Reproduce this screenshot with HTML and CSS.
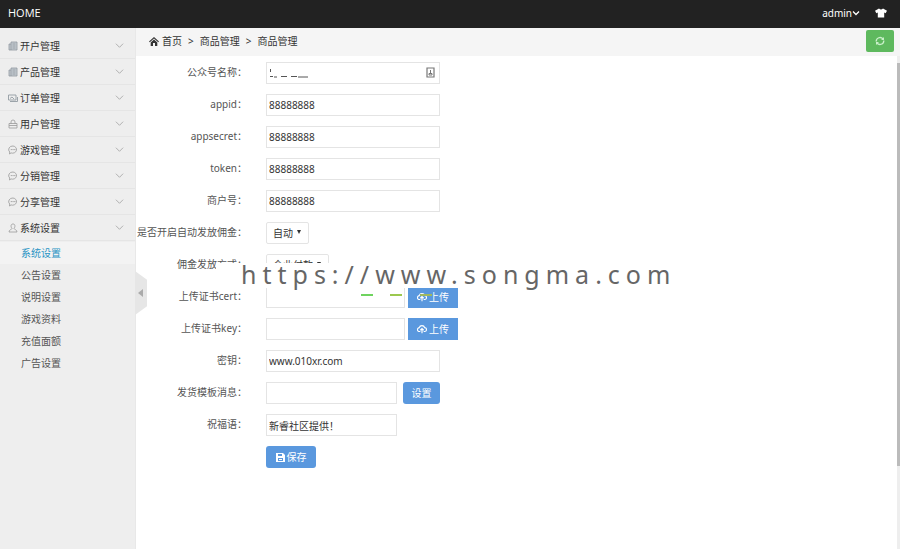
FILE: index.html
```html
<!DOCTYPE html>
<html lang="zh-CN">
<head>
<meta charset="UTF-8">
<meta name="viewport" content="width=device-width, initial-scale=1.0">
<title>系统设置</title>
<link rel="stylesheet" href="styles.css">
</head>
<body>

<svg class="defs" width="0" height="0">
  <symbol id="i-down" viewBox="0 0 10 10"><path d="M1 3l4 4 4-4" fill="none" stroke="currentColor"/></symbol>
  <symbol id="i-doc" viewBox="0 0 10 10"><path d="M3 1h6v8H1V3h2zM3 3v6M4.500 3h3M4.500 5h3M4.500 7h3" fill="#c3cad0" stroke="#8f989f" stroke-width=".8"/></symbol>
  <symbol id="i-card" viewBox="0 0 10 10"><path d="M.5 2h7.500v5H.5zM2 8.500h7.500V4M2 5.500l2-1.500 2 2" fill="none" stroke="#929ba2" stroke-width=".9"/></symbol>
  <symbol id="i-bag" viewBox="0 0 10 10"><path d="M1 4.500h8V9H1zM3 4.500V3a2 2 0 0 1 4 0v1.500M1 6.500h8" fill="none" stroke="#999" stroke-width=".8"/></symbol>
  <symbol id="i-chat" viewBox="0 0 10 10"><path d="M5 1a4 3.600 0 1 1-2 6.900L1.500 9l.2-2A4 3.600 0 0 1 5 1z" fill="none" stroke="#999" stroke-width=".8"/><path d="M2.800 4.600h.9M4.600 4.600h.9M6.400 4.600h.9" stroke="#888"/></symbol>
  <symbol id="i-user" viewBox="0 0 10 10"><path d="M5 1c2.500 0 2.300 3 1 4.500 0 1 3 1 3 3.500H1c0-2.500 3-2.500 3-3.500C2.700 4 2.500 1 5 1z" fill="none" stroke="#999" stroke-width=".8"/></symbol>
  <symbol id="i-upload" viewBox="0 0 12 12"><path d="M4 9H3a2.300 2.300 0 0 1-.3-4.600 3.400 3.400 0 0 1 6.500 0A2.300 2.300 0 0 1 9 9H8M6 11V6M4 7.500l2-2 2 2" fill="none" stroke="currentColor" stroke-width="1.400"/></symbol>
</svg>

<header class="topbar">
  <a class="brand" href="#">HOME</a>
  <div class="topbar-right">
    <a class="admin" href="#">admin<svg width="8" height="8" viewBox="0 0 8 8"><path d="M1 2.500l3 3 3-3" fill="none" stroke="#fff" stroke-width="1.300"/></svg></a>
    <a class="skin" href="#" aria-label="skin"><svg width="12" height="10" viewBox="0 0 12 10"><path d="M4 .5Q6 2.500 8 .5L12 2.800 10.600 5.300 9.200 4.600V9.500H2.800V4.600L1.400 5.300 0 2.800z" fill="#fff"/></svg></a>
  </div>
</header>

<div class="layout">
  <aside class="sidebar">
    <ul class="menu">
      <li><a href="#"><svg class="icon"><use href="#i-doc"/></svg>开户管理<svg class="arrow"><use href="#i-down"/></svg></a></li>
      <li><a href="#"><svg class="icon"><use href="#i-doc"/></svg>产品管理<svg class="arrow"><use href="#i-down"/></svg></a></li>
      <li><a href="#"><svg class="icon"><use href="#i-card"/></svg>订单管理<svg class="arrow"><use href="#i-down"/></svg></a></li>
      <li><a href="#"><svg class="icon"><use href="#i-bag"/></svg>用户管理<svg class="arrow"><use href="#i-down"/></svg></a></li>
      <li><a href="#"><svg class="icon"><use href="#i-chat"/></svg>游戏管理<svg class="arrow"><use href="#i-down"/></svg></a></li>
      <li><a href="#"><svg class="icon"><use href="#i-chat"/></svg>分销管理<svg class="arrow"><use href="#i-down"/></svg></a></li>
      <li><a href="#"><svg class="icon"><use href="#i-chat"/></svg>分享管理<svg class="arrow"><use href="#i-down"/></svg></a></li>
      <li><a href="#"><svg class="icon"><use href="#i-user"/></svg>系统设置<svg class="arrow"><use href="#i-down"/></svg></a></li>
    </ul>
    <ul class="submenu">
      <li><a class="active" href="#">系统设置</a></li>
      <li><a href="#">公告设置</a></li>
      <li><a href="#">说明设置</a></li>
      <li><a href="#">游戏资料</a></li>
      <li><a href="#">充值面额</a></li>
      <li><a href="#">广告设置</a></li>
    </ul>
    <button class="collapse" type="button" aria-label="收起"></button>
  </aside>

  <main class="main">
    <nav class="breadcrumb">
      <svg width="10" height="9" viewBox="0 0 10 9"><path d="M5 0l5 4.500-.8.800L5 1.600.8 5.300 0 4.500zM5 2.500l3.300 3V9H6V6H4v3H1.700V5.500z" fill="#333"/></svg>
      <a href="#">首页</a><span>&gt;</span><a href="#">商品管理</a><span>&gt;</span><a href="#">商品管理</a>
      <button class="refresh" type="button" aria-label="刷新"><svg width="10" height="10" viewBox="0 0 10 10"><path d="M1.200 5.500A3.800 3.800 0 0 1 8 3M8.800 4.500A3.800 3.800 0 0 1 2 7" fill="none" stroke="#c9efc9" stroke-width="1.300"/><path d="M9 1v3H6zM1 9V6h3z" fill="#c9efc9"/></svg></button>
    </nav>

    <div class="content">
      <form class="form">
        <div class="row">
          <label for="name">公众号名称：</label>
          <div class="field">
            <input class="text" type="text" id="name">
            <svg class="masked" width="42" height="10" viewBox="0 0 42 10"><path d="M1.500 1v3M1 8.500h3M5 9h3M12 8.500h6M22 8.500h6M29 9h10" stroke="#555" fill="none"/></svg>
            <svg class="contact" width="9" height="11" viewBox="0 0 9 11"><path d="M1 1h7v9H1z" fill="#fff" stroke="#777" stroke-width="1.200"/><path d="M4.500 3v3M3 8V6.500h3V8z" fill="none" stroke="#777"/></svg>
          </div>
        </div>
        <div class="row">
          <label for="appid">appid：</label>
          <input class="text" type="text" id="appid" value="88888888">
        </div>
        <div class="row">
          <label for="appsecret">appsecret：</label>
          <input class="text" type="text" id="appsecret" value="88888888">
        </div>
        <div class="row">
          <label for="token">token：</label>
          <input class="text" type="text" id="token" value="88888888">
        </div>
        <div class="row">
          <label for="mch">商户号：</label>
          <input class="text" type="text" id="mch" value="88888888">
        </div>
        <div class="row">
          <label for="auto">是否开启自动发放佣金：</label>
          <div class="select"><select id="auto"><option>自动</option></select></div>
        </div>
        <div class="row">
          <label for="way">佣金发放方式：</label>
          <div class="select"><select id="way"><option>企业付款</option></select></div>
          <div class="watermark">
            https://www.songma.com
            <i class="dash green"></i><i class="dash lime"></i><i class="dash olive"></i>
          </div>
        </div>
        <div class="row">
          <label for="cert">上传证书cert：</label>
          <input class="text file" type="text" id="cert">
          <button class="btn upload" type="button"><svg width="10" height="10"><use href="#i-upload"/></svg>上传</button>
        </div>
        <div class="row">
          <label for="key">上传证书key：</label>
          <input class="text file" type="text" id="key">
          <button class="btn upload" type="button"><svg width="10" height="10"><use href="#i-upload"/></svg>上传</button>
        </div>
        <div class="row">
          <label for="secret">密钥：</label>
          <input class="text" type="text" id="secret" value="www.010xr.com">
        </div>
        <div class="row">
          <label for="tpl">发货模板消息：</label>
          <input class="text short" type="text" id="tpl">
          <button class="btn set" type="button">设置</button>
        </div>
        <div class="row">
          <label for="bless">祝福语：</label>
          <input class="text short" type="text" id="bless" value="新睿社区提供！">
        </div>
        <div class="row actions">
          <button class="btn" type="submit"><svg width="9" height="9" viewBox="0 0 9 9"><path d="M0 0h7l2 2v7H0z" fill="#fff"/><path d="M2 1h4v2H2zM2 5h5v3H2z" fill="#5a98de"/><path d="M3 6.500h3" stroke="#fff"/></svg>保存</button>
        </div>
      </form>
      <div class="scrollbar"><div class="thumb"></div></div>
    </div>
  </main>
</div>

</body>
</html>
```

FILE: styles.css
```css
* {
  box-sizing: border-box;
}
body {
  display: flex;
  flex-direction: column;
  min-height: 100vh;
  margin: 0;
  background-color: #fff;
  color: #333;
  font-family: "Noto Sans", "Noto Sans CJK SC", sans-serif;
  font-size: 10px;
  line-height: 16px;
}
a {
  color: inherit;
  text-decoration: none;
}
ul {
  list-style: none;
  margin: 0;
  padding: 0;
}
button, input, select {
  font: inherit;
  color: inherit;
}
.defs {
  position: absolute;
}

/* top bar */
.topbar {
  display: flex;
  justify-content: space-between;
  align-items: center;
  height: 28px;
  padding: 0 13px 2px 8px;
  background-color: #222;
  color: #fff;
}
.brand {
  font-family: "Open Sans", sans-serif;
  font-size: 11px;
}
.topbar-right, .admin {
  display: flex;
  align-items: center;
}
.topbar-right {
  gap: 15px;
}
.skin {
  display: flex;
}

.layout {
  display: flex;
  flex: 1;
}

/* left menu */
.sidebar {
  position: relative;
  flex: none;
  width: 136px;
  padding-top: 5px;
  background-color: #eee;
  border-right: 1px solid #e8e8e8;
}
.menu a {
  display: flex;
  align-items: center;
  height: 26px;
  padding: 0 11px 0 8px;
  border-bottom: 1px solid #e5e5e5;
}
.icon {
  width: 10px;
  height: 10px;
  margin-right: 2px;
}
.arrow {
  width: 9px;
  height: 9px;
  margin-left: auto;
  color: #aaa;
}
.submenu {
  padding-top: 1px;
}
.submenu a {
  display: block;
  padding: 3px 0 3px 21px;
  color: #555;
}
.submenu .active {
  background-color: #f3f3f3;
  color: #2a93c4;
}
.collapse {
  position: absolute;
  top: 243px;
  left: 100%;
  width: 12px;
  height: 44px;
  padding: 0;
  border: none;
  background-color: #e6e6e6;
  clip-path: polygon(0 0, 100% 20%, 100% 80%, 0 100%);
}
.collapse::before {
  content: "";
  display: block;
  width: 0;
  margin-left: 3px;
  border: 4px solid transparent;
  border-left: 0;
  border-right: 5px solid #aaa;
}

/* content */
.main {
  display: flex;
  flex-direction: column;
  flex: 1;
}
.breadcrumb {
  display: flex;
  align-items: center;
  height: 28px;
  padding: 0 6px 2px 13px;
  background-color: #f5f5f5;
}
.breadcrumb a {
  margin-left: 3px;
}
.breadcrumb span {
  margin: 0 3px 0 6px;
}
.refresh {
  display: flex;
  align-items: center;
  justify-content: center;
  width: 28px;
  height: 22px;
  margin-left: auto;
  padding: 0;
  border: none;
  border-radius: 2px;
  background-color: #5eb95e;
}
.content {
  display: flex;
  flex: 1;
}
.form {
  display: flex;
  flex-direction: column;
  flex: 1;
  gap: 10px;
  padding: 6px 0;
}
.row {
  position: relative;
  display: flex;
  height: 22px;
}
.row label {
  width: 111px;
  margin-right: 19px;
  padding-top: 2px;
  color: #555;
  text-align: right;
  white-space: nowrap;
}
.field {
  position: relative;
}
.text {
  width: 174px;
  height: 22px;
  padding: 0 2px;
  border: 1px solid #e4e4e4;
  background-color: #fff;
}
.text.file {
  width: 139px;
  margin-right: 3px;
}
.text.short {
  width: 131px;
  margin-right: 6px;
}
.masked {
  position: absolute;
  top: 6px;
  left: 3px;
}
.contact {
  position: absolute;
  top: 5px;
  right: 5px;
}
.select {
  position: relative;
}
.select select {
  appearance: none;
  height: 22px;
  padding: 0 15px 0 6px;
  border: 1px solid #e4e4e4;
  border-radius: 2px;
  background-color: #fff;
}
.select::after {
  content: "";
  position: absolute;
  top: 8px;
  right: 8px;
  border: 2px solid transparent;
  border-top: 4px solid #333;
  border-bottom: 0;
}
.btn {
  display: flex;
  align-items: center;
  justify-content: center;
  gap: 2px;
  width: 50px;
  height: 22px;
  padding: 0;
  border: none;
  border-radius: 3px;
  background-color: #5a98de;
  color: #fff;
}
.btn.upload {
  border-radius: 0;
}
.btn.set {
  width: 37px;
}
.actions {
  padding-left: 130px;
}

/* site address laid over the form */
.watermark {
  position: absolute;
  z-index: 1;
  top: 9px;
  left: 80px;
  width: 460px;
  height: 25px;
  padding-left: 25px;
  background-color: #fff;
  color: #666;
  font-size: 25px;
  line-height: 22px;
  letter-spacing: 6px;
  white-space: nowrap;
}
.dash {
  position: absolute;
  top: 31px;
  width: 12px;
  height: 2px;
}
.green {
  left: 145px;
  background-color: #6fd35f;
}
.lime {
  left: 174px;
  background-color: #9cc84f;
}
.olive {
  left: 204px;
  background-color: #9fb85e;
}

.scrollbar {
  width: 3px;
  padding-top: 7px;
  background-color: #eee;
}
.thumb {
  height: 83%;
  background-color: #bbb;
}
```
